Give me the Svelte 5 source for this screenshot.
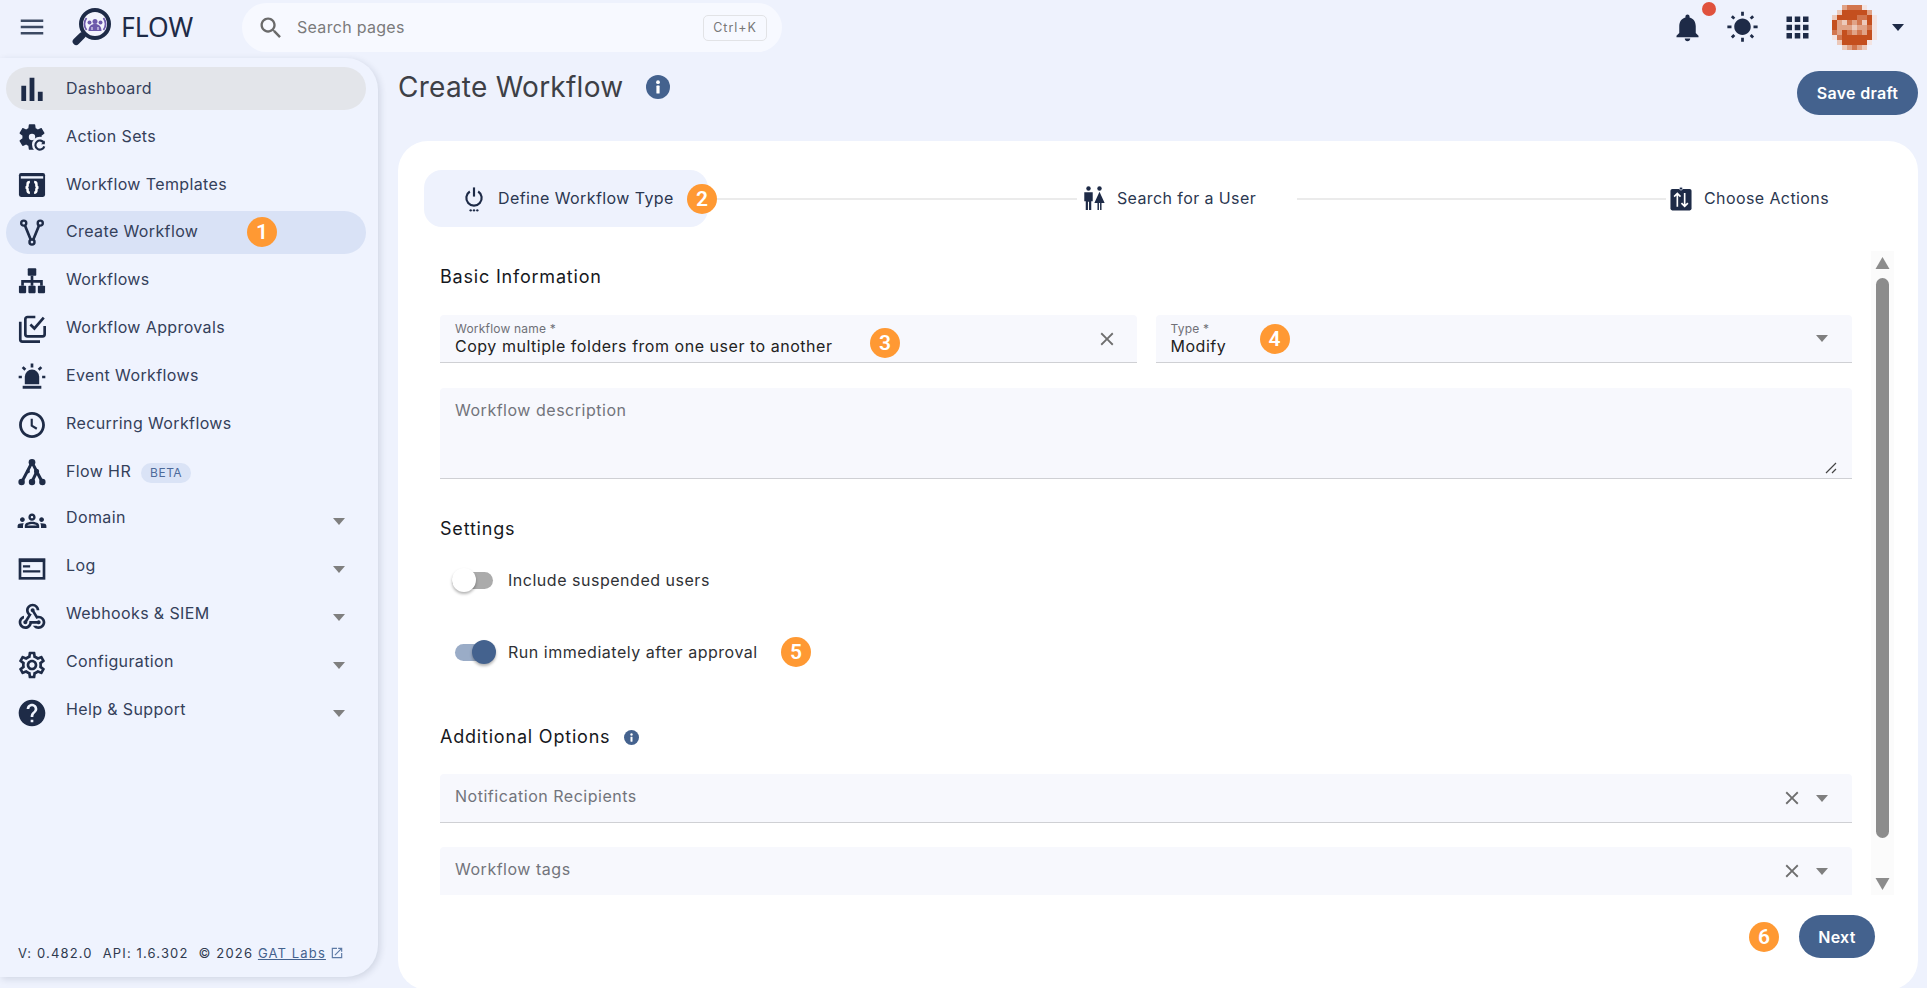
<script>
  const nav = [
    { key: 'bars', label: 'Dashboard', cls: 'hover' },
    { key: 'gearsync', label: 'Action Sets' },
    { key: 'template', label: 'Workflow Templates' },
    { key: 'fork', label: 'Create Workflow', cls: 'active', badge: 1 },
    { key: 'sitemap', label: 'Workflows' },
    { key: 'approve', label: 'Workflow Approvals' },
    { key: 'siren', label: 'Event Workflows' },
    { key: 'clock', label: 'Recurring Workflows' },
    { key: 'tree', label: 'Flow HR', beta: true },
    { key: 'groups', label: 'Domain', arrow: true },
    { key: 'log', label: 'Log', arrow: true },
    { key: 'hook', label: 'Webhooks & SIEM', arrow: true },
    { key: 'cog', label: 'Configuration', arrow: true },
    { key: 'help', label: 'Help & Support', arrow: true }
  ];

  const avatarRows = [
    '..cbbbe..',
    '.daaaaac.',
    'daaaabbae',
    'acdbcbdae',
    'acccdccbe',
    'bcabcbcae',
    'ebaaaaaae',
    '.daaaaae.',
    '..dcbcd..'
  ];
  const tones = { '.': 'transparent', a: '#c44f1e', b: '#d2764e', c: '#e0a387', d: '#ecc9ba', e: '#f3e4e2' };
  const avatar = avatarRows.flatMap((r) => r.split('').map((c) => tones[c]));
</script>

{#snippet caret()}
  <svg class="caret" viewBox="0 0 12 7"><path d="M0 0h12L6 7z" /></svg>
{/snippet}

{#snippet closeIcon()}
  <svg class="close" viewBox="0 0 24 24"><path d="M19 6.41 17.59 5 12 10.59 6.41 5 5 6.41 10.59 12 5 17.59 6.41 19 12 13.41 17.59 19 19 17.59 13.41 12z" /></svg>
{/snippet}

{#snippet navIcon(key)}
  <svg class="nav-icon" viewBox="0 0 24 24">
    {#if key === 'bars'}
      <path d="M4 9.5h3.6V21H4zm12.4 4.5H20v7h-3.6zM10.2 3.5h3.6V21h-3.6z" />
    {:else if key === 'gearsync'}
      <path d="M19.14 12.94c.04-.3.06-.61.06-.94 0-.32-.02-.64-.07-.94l2.03-1.58c.18-.14.23-.41.12-.61l-1.92-3.32c-.12-.22-.37-.29-.59-.22l-2.39.96c-.5-.38-1.03-.7-1.62-.94l-.36-2.54c-.04-.24-.24-.41-.48-.41h-3.84c-.24 0-.43.17-.47.41l-.36 2.54c-.59.24-1.13.57-1.62.94l-2.39-.96c-.22-.08-.47 0-.59.22L2.74 8.87c-.12.21-.08.47.12.61l2.03 1.58c-.05.3-.09.63-.09.94s.02.64.07.94l-2.03 1.58c-.18.14-.23.41-.12.61l1.92 3.32c.12.22.37.29.59.22l2.39-.96c.5.38 1.03.7 1.62.94l.36 2.54c.05.24.24.41.48.41h3.84c.24 0 .44-.17.47-.41l.36-2.54z" />
      <circle cx="12" cy="12" r="2.4" class="bg" />
      <circle cx="18" cy="17.8" r="6" class="bg" />
      <path d="M21 16.6a3.4 3.4 0 1 0 .2 2.4" class="line thin" />
      <path d="M21.6 14.6v2.8h-2.8z" />
    {:else if key === 'template'}
      <rect x="2.2" y="3" width="19.6" height="18" rx="1.6" />
      <rect x="3.6" y="5.4" width="16.8" height="1.8" class="bg" />
      <path d="M10.4 9.8c-1.3 0-1.7.5-1.7 1.4v1c0 .9-.5 1.6-1.6 1.6 1.1 0 1.6.7 1.6 1.6v1c0 .9.4 1.4 1.7 1.4M13.6 9.8c1.3 0 1.7.5 1.7 1.4v1c0 .9.5 1.6 1.6 1.6-1.1 0-1.6.7-1.6 1.6v1c0 .9-.4 1.4-1.7 1.4" class="white bold" />
    {:else if key === 'fork'}
      <path d="M6.8 6.6 11 16.8M17.2 6.6 13 16.8" class="line" />
      <circle cx="5.8" cy="4.6" r="1.9" class="ring" />
      <circle cx="18.2" cy="4.6" r="1.9" class="ring" />
      <circle cx="12" cy="18.8" r="1.9" class="ring" />
    {:else if key === 'sitemap'}
      <rect x="8.8" y="2.5" width="6.4" height="5.6" rx=".6" />
      <rect x="2.2" y="15.5" width="5.4" height="5.6" rx=".6" />
      <rect x="9.3" y="15.5" width="5.4" height="5.6" rx=".6" />
      <rect x="16.4" y="15.5" width="5.4" height="5.6" rx=".6" />
      <path d="M12 8v7.5M4.9 15.5v-3.2h14.2v3.2" class="line" />
    {:else if key === 'approve'}
      <path d="M14.5 3H8.6A1.6 1.6 0 0 0 7 4.6v11.3a1.6 1.6 0 0 0 1.6 1.6h11.3a1.6 1.6 0 0 0 1.6-1.6V9.8" class="line" />
      <path d="M3.2 6.6v13.3a1.6 1.6 0 0 0 1.6 1.6h13.2M10.8 8.6l3 3L20.8 3.4" class="line" />
    {:else if key === 'siren'}
      <path d="M6.6 17.4v-5.6a5.4 5.4 0 0 1 10.8 0v5.6z" />
      <rect x="5" y="18.6" width="14" height="2.2" />
      <path d="M12 1.8v3M5 4.6l2 2M19 4.6l-2 2M2 12h2.4M19.6 12H22" class="line" />
    {:else if key === 'clock'}
      <path d="M11.99 2.3C6.6 2.3 2.3 6.65 2.3 12s4.3 9.7 9.69 9.7c5.4 0 9.71-4.35 9.71-9.7S17.39 2.3 11.99 2.3zM12 19.6c-4.2 0-7.6-3.4-7.6-7.6s3.4-7.6 7.6-7.6 7.6 3.4 7.6 7.6-3.4 7.6-7.6 7.6z" />
      <path d="M11.8 7.4v5.1l3.8 2.3" class="line thin" />
    {:else if key === 'tree'}
      <path d="M12 4 4.5 18.5M12 4l3.6 7M15.6 11l-3.6 7.5M15.6 11l4 7.5" class="line wide" />
      <circle cx="12" cy="4" r="2.5" />
      <circle cx="15.4" cy="10.8" r="1.9" />
      <circle cx="9" cy="10.8" r="1.4" />
      <circle cx="4.2" cy="18.8" r="2.4" />
      <circle cx="12" cy="18.8" r="2.4" />
      <circle cx="19.8" cy="18.8" r="2.4" />
    {:else if key === 'groups'}
      <path transform="translate(1.2 1) scale(.9)" d="M4 13c1.1 0 2-.9 2-2s-.9-2-2-2-2 .9-2 2 .9 2 2 2zm1.13 1.1c-.37-.06-.74-.1-1.13-.1-.99 0-1.93.21-2.78.58C.48 14.9 0 15.62 0 16.43V18h4.5v-1.61c0-.83.23-1.61.63-2.29zM20 13c1.1 0 2-.9 2-2s-.9-2-2-2-2 .9-2 2 .9 2 2 2zm4 3.43c0-.81-.48-1.53-1.22-1.85-.85-.37-1.79-.58-2.78-.58-.39 0-.76.04-1.13.1.4.68.63 1.46.63 2.29V18H24v-1.57zm-7.76-2.78c-1.17-.52-2.61-.9-4.24-.9-1.63 0-3.07.39-4.24.9C6.68 14.13 6 15.21 6 16.39V18h12v-1.61c0-1.18-.68-2.26-1.76-2.74zM8.07 16c.09-.23.13-.39.91-.69.97-.38 1.99-.56 3.02-.56s2.05.18 3.02.56c.77.3.81.46.91.69H8.07zM12 8c.55 0 1 .45 1 1s-.45 1-1 1-1-.45-1-1 .45-1 1-1m0-2c-1.66 0-3 1.34-3 3s1.34 3 3 3 3-1.34 3-3-1.34-3-3-3z" />
    {:else if key === 'log'}
      <rect x="3" y="5" width="18" height="14" class="line" />
      <rect x="2.2" y="4.4" width="19.6" height="2.4" />
      <path d="M5.2 10h5.4M5.2 13.8h13" class="line thin" />
    {:else if key === 'hook'}
      <path d="M10 15h5.88c.27-.31.67-.5 1.12-.5.83 0 1.5.67 1.5 1.5s-.67 1.5-1.5 1.5c-.44 0-.84-.19-1.12-.5H11.9c-.46 2.28-2.48 4-4.9 4-2.76 0-5-2.24-5-5 0-2.42 1.72-4.44 4-4.9v2.07c-1.16.41-2 1.53-2 2.83 0 1.65 1.35 3 3 3s3-1.35 3-3v-1zm2.5-11c1.65 0 3 1.35 3 3h2c0-2.76-2.24-5-5-5s-5 2.24-5 5c0 1.43.6 2.71 1.55 3.62l-2.35 3.9c-.68.14-1.2.75-1.2 1.48 0 .83.67 1.5 1.5 1.5s1.5-.67 1.5-1.5c0-.16-.02-.31-.07-.45l3.38-5.63C10.49 9.61 9.5 8.42 9.5 7c0-1.65 1.35-3 3-3zm4.5 9c-.64 0-1.23.2-1.72.54l-3.05-5.07C11.53 8.35 11 7.74 11 7c0-.83.67-1.5 1.5-1.5S14 6.17 14 7c0 .15-.02.29-.06.43l2.19 3.65c.28-.05.57-.08.87-.08 2.76 0 5 2.24 5 5s-2.24 5-5 5c-1.85 0-3.47-1.01-4.33-2.5h2.67c.48.32 1.05.5 1.66.5 1.65 0 3-1.35 3-3s-1.35-3-3-3z" />
    {:else if key === 'cog'}
      <path d="M19.43 12.98c.04-.32.07-.64.07-.98 0-.34-.03-.66-.07-.98l2.11-1.65c.19-.15.24-.42.12-.64l-2-3.46c-.09-.16-.26-.25-.44-.25-.06 0-.12.01-.17.03l-2.49 1c-.52-.4-1.08-.73-1.69-.98l-.38-2.65C14.46 2.18 14.25 2 14 2h-4c-.25 0-.46.18-.49.42l-.38 2.65c-.61.25-1.17.59-1.69.98l-2.49-1c-.06-.02-.12-.03-.18-.03-.17 0-.34.09-.43.25l-2 3.46c-.13.22-.07.49.12.64l2.11 1.65c-.04.32-.07.65-.07.98 0 .33.03.66.07.98l-2.11 1.65c-.19.15-.24.42-.12.64l2 3.46c.09.16.26.25.44.25.06 0 .12-.01.17-.03l2.49-1c.52.4 1.08.73 1.69.98l.38 2.65c.03.24.24.42.49.42h4c.25 0 .46-.18.49-.42l.38-2.65c.61-.25 1.17-.59 1.69-.98l2.49 1c.06.02.12.03.18.03.17 0 .34-.09.43-.25l2-3.46c.12-.22.07-.49-.12-.64l-2.11-1.65zm-1.98-1.71c.04.31.05.52.05.73 0 .21-.02.43-.05.73l-.14 1.13.89.7 1.08.84-.7 1.21-1.27-.51-1.04-.42-.9.68c-.43.32-.84.56-1.25.73l-1.06.43-.16 1.13-.2 1.35h-1.4l-.19-1.35-.16-1.13-1.06-.43c-.43-.18-.83-.41-1.23-.71l-.91-.7-1.06.43-1.27.51-.7-1.21 1.08-.84.89-.7-.14-1.13c-.03-.31-.05-.54-.05-.74s.02-.43.05-.73l.14-1.13-.89-.7-1.08-.84.7-1.21 1.27.51 1.04.42.9-.68c.43-.32.84-.56 1.25-.73l1.06-.43.16-1.13.2-1.35h1.39l.19 1.35.16 1.13 1.06.43c.43.18.83.41 1.23.71l.91.7 1.06-.43 1.27-.51.7 1.21-1.07.85-.89.7.14 1.13zM12 8c-2.21 0-4 1.79-4 4s1.79 4 4 4 4-1.79 4-4-1.79-4-4-4zm0 6c-1.1 0-2-.9-2-2s.9-2 2-2 2 .9 2 2-.9 2-2 2z" />
    {:else if key === 'help'}
      <path d="M12 2C6.48 2 2 6.48 2 12s4.48 10 10 10 10-4.48 10-10S17.52 2 12 2zm1 17h-2v-2h2v2zm2.07-7.75l-.9.92C13.45 12.9 13 13.5 13 15h-2v-.5c0-1.1.45-2.1 1.17-2.83l1.24-1.26c.37-.36.59-.86.59-1.41 0-1.1-.9-2-2-2s-2 .9-2 2H8c0-2.21 1.79-4 4-4s4 1.79 4 4c0 .88-.36 1.68-.93 2.25z" />
    {/if}
  </svg>
{/snippet}

{#snippet infoIcon(cls)}
  <svg class={cls} viewBox="0 0 24 24"><circle cx="12" cy="12" r="12" class="info-bg" /><rect x="10.4" y="10.6" width="3.2" height="8" rx=".6" fill="#fff" /><circle cx="12" cy="7.2" r="1.9" fill="#fff" /></svg>
{/snippet}

<div class="app">
  <header class="topbar">
    <svg class="menu" viewBox="0 0 24 24"><path d="M3 18h18v-2H3v2zm0-5h18v-2H3v2zm0-7v2h18V6H3z" /></svg>
    <svg class="logo" viewBox="0 0 40 40">
      <rect x="-1" y="28" width="15" height="7" rx="3.5" transform="rotate(-45 7 31)" fill="#1e2b47" />
      <circle cx="23" cy="17" r="14" fill="#f3f4fd" stroke="#1e2b47" stroke-width="4" />
      <path d="M14.5 11a10.5 10.5 0 0 0 0 12M31.5 11a10.5 10.5 0 0 1 0 12" fill="none" stroke="#6d5aab" stroke-width="1.8" />
      <circle cx="23" cy="14.5" r="2.5" fill="#6d5aab" />
      <circle cx="17.5" cy="15.5" r="2" fill="#6d5aab" />
      <circle cx="28.5" cy="15.5" r="2" fill="#6d5aab" />
      <path d="M16.5 24c0-4.5 2.5-7 6.5-7s6.5 2.5 6.5 7z" fill="#6d5aab" />
      <path d="M20 23v-3M26 23v-3" stroke="#f3f4fd" stroke-width="1" />
    </svg>
    <span class="brand">FLOW</span>
    <div class="search">
      <svg class="search-icon" viewBox="0 0 24 24"><path d="M15.5 14h-.79l-.28-.27C15.41 12.59 16 11.11 16 9.5 16 5.91 13.09 3 9.5 3S3 5.91 3 9.5 5.91 16 9.5 16c1.61 0 3.09-.59 4.23-1.57l.27.28v.79l5 4.99L20.49 19l-4.99-5zm-6 0C7.01 14 5 11.99 5 9.5S7.01 5 9.5 5 14 7.01 14 9.5 11.99 14 9.5 14z" /></svg>
      <span class="search-text">Search pages</span>
      <kbd>Ctrl+K</kbd>
    </div>
    <div class="actions">
      <div class="action bell">
        <svg viewBox="0 0 24 24"><path d="M12 22c1.1 0 2-.9 2-2h-4c0 1.1.9 2 2 2zm6-6v-5c0-3.07-1.63-5.64-4.5-6.32V4c0-.83-.67-1.5-1.5-1.5s-1.5.67-1.5 1.5v.68C7.64 5.36 6 7.92 6 11v5l-2 2v1h16v-1l-2-2z" /></svg>
        <span class="dot"></span>
      </div>
      <div class="action">
        <svg viewBox="0 0 24 24"><path d="M6.76 4.84l-1.8-1.79-1.41 1.41 1.79 1.79 1.42-1.41zM4 10.5H1v2h3v-2zm9-9.95h-2V3.5h2V.55zm7.45 3.91l-1.41-1.41-1.79 1.79 1.41 1.41 1.79-1.79zm-3.21 13.7l1.79 1.8 1.41-1.41-1.8-1.79-1.4 1.4zM20 10.5v2h3v-2h-3zm-8-5c-3.31 0-6 2.69-6 6s2.69 6 6 6 6-2.69 6-6-2.69-6-6-6zm-1 16.95h2V19.5h-2v2.95zm-7.45-3.91l1.41 1.41 1.79-1.8-1.41-1.41-1.79 1.8z" /></svg>
      </div>
      <div class="action">
        <svg viewBox="0 0 24 24"><path d="M4 8h4V4H4v4zm6 12h4v-4h-4v4zm-6 0h4v-4H4v4zm0-6h4v-4H4v4zm6 0h4v-4h-4v4zm6-10v4h4V4h-4zm-6 4h4V4h-4v4zm6 6h4v-4h-4v4zm0 6h4v-4h-4v4z" /></svg>
      </div>
      <div class="avatar">
        {#each avatar as tone}<i style="background:{tone}"></i>{/each}
      </div>
      <svg class="user-caret" viewBox="0 0 12 7"><path d="M0 0h12L6 7z" /></svg>
    </div>
  </header>

  <div class="body">
    <aside class="sidebar">
      <nav>
        {#each nav as item}
          <div class="nav-item {item.cls ?? ''}">
            {@render navIcon(item.key)}
            <span class="nav-label" class:raised={item.arrow}>{item.label}</span>
            {#if item.beta}<span class="beta">BETA</span>{/if}
            {#if item.arrow}<span class="nav-arrow">{@render caret()}</span>{/if}
            {#if item.badge}<span class="badge nav-badge">{item.badge}</span>{/if}
          </div>
        {/each}
      </nav>
      <footer class="version">
        <span>V: 0.482.0</span><span>API: 1.6.302</span><span>© 2026 <a href="#top">GAT Labs</a></span>
        <svg viewBox="0 0 24 24"><path d="M19 19H5V5h7V3H3v18h18v-9h-2v7zM14 3v2h3.59l-9.83 9.83 1.41 1.41L19 6.41V10h2V3h-7z" /></svg>
      </footer>
    </aside>

    <main class="main">
      <div class="title-row">
        <h1>Create Workflow</h1>
        {@render infoIcon('title-info')}
        <button class="pill save">Save draft</button>
      </div>

      <section class="card">
        <div class="stepper">
          <div class="step current">
            <svg class="step-icon power" viewBox="0 0 24 32">
              <path d="M7 6.4a9.2 9.2 0 1 0 10 0" class="line heavy" />
              <path d="M12 1.5v11" class="line heavy" />
              <circle cx="8" cy="29" r="1.4" /><circle cx="12" cy="29" r="1.4" /><circle cx="16" cy="29" r="1.4" />
            </svg>
            <span>Define Workflow Type</span>
          </div>
          <span class="badge step-badge">2</span>
          <div class="connector"></div>
          <div class="step middle">
            <svg class="step-icon" viewBox="0 0 24 27">
              <circle cx="6" cy="2.6" r="2.4" /><circle cx="18" cy="2.6" r="2.4" />
              <path d="M1.4 6.6h9.2v10H9V26H6.6v-9H5.4v9H3v-9.4H1.4z" />
              <path d="M18 6.2l5.6 12.2H20.2V26h-1.6v-7.6h-1.2V26h-1.6v-7.6h-3.4z" />
            </svg>
            <span>Search for a User</span>
          </div>
          <div class="connector"></div>
          <div class="step last">
            <svg class="step-icon" viewBox="0 0 24 27">
              <rect x=".5" y="3" width="23" height="23.5" rx="2" />
              <circle cx="12" cy="2.6" r="1.7" class="ring-mini" />
              <path d="M8 22.5V8M4.5 11.5 8 8l3.5 3.5M16 7.5V22M12.5 18.5 16 22l3.5-3.5" class="white" />
            </svg>
            <span>Choose Actions</span>
          </div>
        </div>

        <div class="scroller">
          <div class="form">
            <h2 class="first">Basic Information</h2>
            <div class="two">
              <div class="field filled">
                <label for="wf-name">Workflow name *</label>
                <div class="value" id="wf-name">Copy multiple folders from one user to another</div>
                <span class="field-x">{@render closeIcon()}</span>
                <span class="badge b3">3</span>
              </div>
              <div class="field filled">
                <label for="wf-type">Type *</label>
                <div class="value" id="wf-type">Modify</div>
                <span class="field-arrow">{@render caret()}</span>
                <span class="badge b4">4</span>
              </div>
            </div>
            <div class="field area">
              <span class="placeholder">Workflow description</span>
              <svg class="resize" viewBox="0 0 12 12"><path d="M1 11 11 1M7 11l4-4" /></svg>
            </div>

            <h2 class="settings">Settings</h2>
            <div class="toggle-row first-toggle">
              <span class="switch off"><i></i></span>
              <span>Include suspended users</span>
            </div>
            <div class="toggle-row second-toggle">
              <span class="switch on"><i></i></span>
              <span>Run immediately after approval</span>
              <span class="badge b5">5</span>
            </div>

            <h2 class="additional">Additional Options {@render infoIcon('small-info')}</h2>
            <div class="field select">
              <span class="placeholder">Notification Recipients</span>
              <span class="field-x wide">{@render closeIcon()}</span>
              <span class="field-arrow">{@render caret()}</span>
            </div>
            <div class="field select tags">
              <span class="placeholder">Workflow tags</span>
              <span class="field-x wide">{@render closeIcon()}</span>
              <span class="field-arrow">{@render caret()}</span>
            </div>
          </div>
          <div class="track">
            <svg class="track-arrow" viewBox="0 0 14 12"><path d="M7 0l7 12H0z" /></svg>
            <div class="thumb"></div>
            <svg class="track-arrow down" viewBox="0 0 14 12"><path d="M0 0h14L7 12z" /></svg>
          </div>
        </div>

        <div class="card-footer">
          <span class="badge b6">6</span>
          <button class="pill next">Next</button>
        </div>
      </section>
    </main>
  </div>
</div>

<style>
  :global(body) {
    margin: 0;
    background: #eef2fd;
    font-family: Inter, "Liberation Sans", sans-serif;
    color: #34405a;
  }
  .app {
    height: 100vh;
    overflow: hidden;
    display: flex;
    flex-direction: column;
  }
  svg { display: block; fill: #1e2b47; }
  .line { fill: none; stroke: #1e2b47; stroke-width: 2; }
  .thin { stroke-width: 1.6; }
  .wide { stroke-width: 2.3; }
  .heavy { stroke-width: 2.6; }
  .ring { fill: none; stroke: #1e2b47; stroke-width: 1.8; }
  .bg { fill: #eff3fe; }
  .white { fill: none; stroke: #fff; stroke-width: 1.8; }
  .bold { stroke-width: 1.9; }
  .ring-mini { fill: #1e2b47; stroke: #eef2fd; stroke-width: .8; }

  /* Top bar */
  .topbar {
    height: 58px;
    flex: none;
    display: flex;
    align-items: flex-start;
  }
  .menu { width: 30px; height: 30px; margin: 12px 0 0 17px; fill: #3c4a63; }
  .logo { width: 40px; height: 40px; margin: 7px 0 0 25px; }
  .brand {
    margin: 10px 0 0 9px;
    font: 400 26.5px/34px "Noto Sans", sans-serif;
    color: #1e2b47;
    width: 121px;
  }
  .search {
    width: 540px;
    height: 49px;
    margin-top: 3px;
    border-radius: 25px;
    background: #f7f9ff;
    display: flex;
    align-items: center;
    box-sizing: border-box;
    padding: 0 15px 0 15px;
  }
  .search-icon { width: 28px; height: 28px; fill: #6a6a6a; }
  .search-text { margin-left: 12px; font-size: 16px; color: #7b7b7b; letter-spacing: .3px; position: relative; top: -1px; }
  kbd {
    margin-left: auto;
    font: 400 12.5px/24px Inter, sans-serif;
    color: #777;
    border: 1px solid #e2e3e6;
    border-radius: 5px;
    padding: 0 9px;
    letter-spacing: 1px;
  }
  .actions {
    margin-left: auto;
    display: flex;
    align-items: center;
    height: 55px;
    padding-right: 23px;
  }
  .action { width: 40px; height: 40px; margin-right: 15px; display: flex; align-items: center; justify-content: center; position: relative; }
  .action svg { width: 33px; height: 33px; }
  .dot {
    position: absolute;
    left: 35px;
    top: -6px;
    width: 14px;
    height: 14px;
    border-radius: 50%;
    background: #e0523d;
  }
  .avatar {
    width: 45px;
    height: 45px;
    display: grid;
    grid-template-columns: repeat(9, 1fr);
    grid-auto-rows: 1fr;
    margin-right: 15px;
  }
  .avatar i { display: block; }
  .user-caret { width: 12px; height: 7px; }

  /* Sidebar */
  .body { flex: 1; display: flex; min-height: 0; }
  .sidebar {
    width: 378px;
    height: 919px;
    flex: none;
    box-sizing: border-box;
    padding: 9px 12px 0 6px;
    background: #eff3fe;
    border-radius: 0 32px 32px 0;
    box-shadow: 2px 2px 7px rgba(30, 43, 71, .14);
    display: flex;
    flex-direction: column;
  }
  .nav-item {
    height: 43px;
    margin-bottom: 5px;
    border-radius: 22px;
    padding-left: 10px;
    display: flex;
    align-items: center;
    position: relative;
    font-size: 16px;
  }
  .hover { background: #e3e5ea; }
  .active { background: #d9e2f6; }
  .nav-icon { width: 32px; height: 32px; flex: none; margin-right: 18px; }
  .nav-label { position: relative; top: -2px; letter-spacing: .38px; white-space: nowrap; }
  .nav-item:nth-child(-n+3) .nav-label { top: -1px; }
  .nav-label.raised { top: -4px; }
  .beta {
    margin-left: 10px;
    background: #dae3f6;
    color: #4d6a9a;
    font-size: 12px;
    line-height: 20px;
    border-radius: 10px;
    padding: 0 9px;
    letter-spacing: .5px;
  }
  .nav-arrow { margin-left: auto; margin-right: 21px; position: relative; top: 1px; }
  .caret { width: 12px; height: 7px; fill: #7f7f7f; }
  .version {
    margin-top: auto;
    padding: 0 0 16px 12px;
    display: flex;
    align-items: center;
    font-size: 13px;
    letter-spacing: 1.15px;
    gap: 10px;
    white-space: nowrap;
    color: #2f3a4f;
  }
  .version a { color: #44628e; }
  .version svg { width: 14px; height: 14px; margin-left: -6px; fill: #5d7aa5; }

  /* Main */
  .main {
    flex: 1;
    min-width: 0;
    padding: 0 9px 0 20px;
    display: flex;
    flex-direction: column;
  }
  .title-row { height: 83px; flex: none; display: flex; align-items: flex-start; }
  h1 {
    margin: 9px 0 0;
    font: 400 28px/40px Inter, sans-serif;
    color: #3d4046;
    letter-spacing: .25px;
  }
  .title-info { width: 24px; height: 24px; margin: 17px 0 0 23px; }
  .info-bg { fill: #44628e; }
  .pill {
    border: 0;
    background: #44628e;
    color: #fff;
    border-radius: 22px;
    font: 600 16px/20px Inter, sans-serif;
    height: 44px;
    letter-spacing: .3px;
  }
  .save { margin: 13px 0 0 auto; width: 121px; }

  .card {
    flex: 1;
    margin-bottom: -2px;
    background: #fff;
    border-radius: 30px;
    padding: 29px 24px 0 26px;
    display: flex;
    flex-direction: column;
    min-height: 0;
  }
  .stepper { height: 57px; flex: none; display: flex; align-items: center; position: relative; }
  .step { height: 57px; display: flex; align-items: center; box-sizing: border-box; font-size: 16px; white-space: nowrap; color: #2b3750; letter-spacing: .4px; }
  .step span { position: relative; top: -1px; }
  .current { width: 284px; padding-left: 40px; background: #eef2fd; border-radius: 18px; }
  .middle { padding: 0 41px 0 6px; }
  .last { padding: 0 65px 0 4px; }
  .step-icon { width: 22px; height: 25px; margin-right: 12px; flex: none; }
  .power { width: 20px; height: 29px; margin-right: 14px; position: relative; top: 1px; }
  .connector { flex: 1; height: 2px; background: #ebebeb; }

  .badge {
    position: absolute;
    width: 30px;
    height: 30px;
    border-radius: 50%;
    background: #ff9933;
    color: #fff;
    font: 600 21px/30px Roboto, Inter, sans-serif;
    text-align: center;
    letter-spacing: 0;
  }
  .nav-badge { left: 241px; top: 6px; }
  .step-badge { left: 263px; top: 14px; }
  .b3 { left: 430px; top: 13px; }
  .b4 { left: 104px; top: 9px; }
  .b5 { left: 341px; top: -3px; }
  .b6 { position: static; margin-right: 20px; }

  .scroller {
    margin-top: 24px;
    height: 644px;
    flex: none;
    display: flex;
    overflow: hidden;
  }
  .form { flex: 1; min-width: 0; margin: 0 19px 0 16px; }
  h2 {
    margin: 0;
    font: 400 18px/22px Inter, sans-serif;
    color: #16181d;
    letter-spacing: .8px;
  }
  .first { padding-top: 15px; margin-bottom: 27px; }
  .two { display: grid; grid-template-columns: 1fr 1fr; gap: 19px; }
  .field {
    position: relative;
    background: #f7f8fd;
    border-radius: 4px 4px 0 0;
    border-bottom: 1px solid #cfd0d4;
    box-sizing: border-box;
    padding-left: 15px;
  }
  .filled { height: 48px; padding-top: 7px; }
  label {
    display: block;
    font-size: 12px;
    line-height: 14px;
    color: #6f7077;
    letter-spacing: .2px;
  }
  .value { font-size: 16px; line-height: 20px; color: #222; letter-spacing: .53px; }
  .field-x { position: absolute; right: 19px; top: 13px; }
  .field-x.wide { right: 49px; top: 13px; }
  .close { width: 22px; height: 22px; fill: #6e6e6e; }
  .field-arrow { position: absolute; right: 24px; top: 20px; }
  .area { height: 91px; margin-top: 25px; padding-top: 12px; }
  .select { height: 49px; padding-top: 12px; margin-top: 26px; }
  .select .field-arrow { top: 21px; }
  .tags { margin-top: 24px; border-bottom: 0; height: 60px; }
  .placeholder { font-size: 16px; line-height: 20px; color: #72747b; letter-spacing: .52px; }
  .resize { position: absolute; right: 15px; bottom: 4px; width: 12px; height: 12px; fill: none; stroke: #444; stroke-width: 1.2; }

  .settings { margin-top: 39px; }
  .additional { margin-top: 62px; display: flex; align-items: center; gap: 14px; }
  .small-info { width: 15px; height: 15px; }
  .toggle-row {
    position: relative;
    height: 24px;
    display: flex;
    align-items: center;
    font-size: 16px;
    color: #2f3135;
    letter-spacing: .52px;
  }
  .first-toggle { margin-top: 28px; }
  .second-toggle { margin-top: 48px; }
  .switch { position: relative; width: 41px; height: 17px; margin: 0 15px 0 12px; border-radius: 9px; display: block; flex: none; }
  .switch i {
    position: absolute;
    top: -3.5px;
    width: 24px;
    height: 24px;
    border-radius: 50%;
    box-shadow: 0 2px 3px rgba(0, 0, 0, .3);
  }
  .off { background: #ababab; }
  .off i { left: 0; background: #fff; }
  .on { background: #9aacc7; width: 40px; margin: 0 13px 0 15px; }
  .on i { right: -1px; background: #44628e; }

  .track {
    width: 23px;
    flex: none;
    background: #fbfbfb;
    display: flex;
    flex-direction: column;
    align-items: center;
    padding-top: 6px;
    box-sizing: border-box;
  }
  .track-arrow { width: 15px; height: 12px; fill: #8c8c8c; flex: none; }
  .track-arrow.down { margin-top: 40px; }
  .thumb { width: 13px; height: 560px; margin-top: 9px; border-radius: 7px; background: #8c8c8c; flex: none; }

  .card-footer {
    margin-top: 20px;
    display: flex;
    align-items: center;
    justify-content: flex-end;
    padding-right: 19px;
  }
  .next { width: 76px; height: 43px; }
</style>
